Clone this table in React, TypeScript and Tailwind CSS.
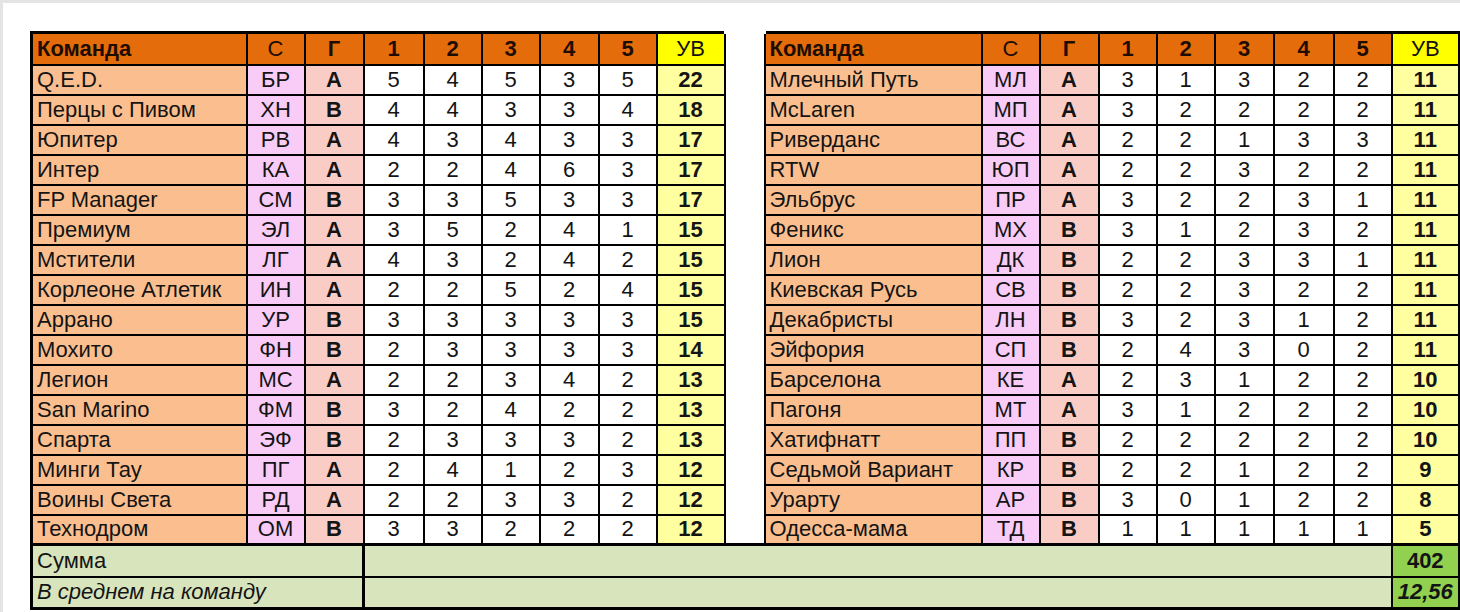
import React from "react";

type Row = [string, string, string, number[], number];

const left: Row[] = [
  ["Q.E.D.", "БР", "А", [5, 4, 5, 3, 5], 22],
  ["Перцы с Пивом", "ХН", "В", [4, 4, 3, 3, 4], 18],
  ["Юпитер", "РВ", "А", [4, 3, 4, 3, 3], 17],
  ["Интер", "КА", "А", [2, 2, 4, 6, 3], 17],
  ["FP Manager", "СМ", "В", [3, 3, 5, 3, 3], 17],
  ["Премиум", "ЭЛ", "А", [3, 5, 2, 4, 1], 15],
  ["Мстители", "ЛГ", "А", [4, 3, 2, 4, 2], 15],
  ["Корлеоне Атлетик", "ИН", "А", [2, 2, 5, 2, 4], 15],
  ["Аррано", "УР", "В", [3, 3, 3, 3, 3], 15],
  ["Мохито", "ФН", "В", [2, 3, 3, 3, 3], 14],
  ["Легион", "МС", "А", [2, 2, 3, 4, 2], 13],
  ["San Marino", "ФМ", "В", [3, 2, 4, 2, 2], 13],
  ["Спарта", "ЭФ", "В", [2, 3, 3, 3, 2], 13],
  ["Минги Тау", "ПГ", "А", [2, 4, 1, 2, 3], 12],
  ["Воины Света", "РД", "А", [2, 2, 3, 3, 2], 12],
  ["Технодром", "ОМ", "В", [3, 3, 2, 2, 2], 12],
];

const right: Row[] = [
  ["Млечный Путь", "МЛ", "А", [3, 1, 3, 2, 2], 11],
  ["McLaren", "МП", "А", [3, 2, 2, 2, 2], 11],
  ["Риверданс", "ВС", "А", [2, 2, 1, 3, 3], 11],
  ["RTW", "ЮП", "А", [2, 2, 3, 2, 2], 11],
  ["Эльбрус", "ПР", "А", [3, 2, 2, 3, 1], 11],
  ["Феникс", "МХ", "В", [3, 1, 2, 3, 2], 11],
  ["Лион", "ДК", "В", [2, 2, 3, 3, 1], 11],
  ["Киевская Русь", "СВ", "В", [2, 2, 3, 2, 2], 11],
  ["Декабристы", "ЛН", "В", [3, 2, 3, 1, 2], 11],
  ["Эйфория", "СП", "В", [2, 4, 3, 0, 2], 11],
  ["Барселона", "КЕ", "А", [2, 3, 1, 2, 2], 10],
  ["Пагоня", "МТ", "А", [3, 1, 2, 2, 2], 10],
  ["Хатифнатт", "ПП", "В", [2, 2, 2, 2, 2], 10],
  ["Седьмой Вариант", "КР", "В", [2, 2, 1, 2, 2], 9],
  ["Урарту", "АР", "В", [3, 0, 1, 2, 2], 8],
  ["Одесса-мама", "ТД", "В", [1, 1, 1, 1, 1], 5],
];

const cell = "border-2 border-black p-0 leading-none";
const hdr = `${cell} bg-[#e46c0a] text-[#1f0c00] text-center font-bold`;

function HeaderCells() {
  return (
    <>
      <td className={`${cell} bg-[#e46c0a] text-[#1f0c00] font-bold text-left pl-[4px]`}>Команда</td>
      <td className={`${hdr} font-normal`}>С</td>
      <td className={hdr}>Г</td>
      {[1, 2, 3, 4, 5].map((n) => (
        <td key={n} className={hdr}>{n}</td>
      ))}
      <td className={`${cell} bg-[#ffff00] text-center text-[#111]`}>УВ</td>
    </>
  );
}

function RowCells({ r }: { r: Row }) {
  return (
    <>
      <td className={`${cell} bg-[#fbbf8f] text-left pl-[4px] whitespace-nowrap`}>{r[0]}</td>
      <td className={`${cell} bg-[#f9ccf7] text-center`}>{r[1]}</td>
      <td className={`${cell} bg-[#f9cdc6] text-center font-bold`}>{r[2]}</td>
      {r[3].map((n, i) => (
        <td key={i} className={`${cell} bg-white text-center`}>{n}</td>
      ))}
      <td className={`${cell} bg-[#ffff9f] text-center font-bold`}>{r[4]}</td>
    </>
  );
}

export default function App() {
  const widthsL = [215, 58, 59, 60, 58, 58, 59, 58, 68];
  const widthsR = [217, 58, 59, 58, 58, 59, 60, 58, 68];
  return (
    <div
      className="w-[1460px] h-[612px] bg-white border-t-[3px] border-l-[3px] border-[#e4e4e4] overflow-hidden"
      style={{ fontFamily: '"Liberation Sans", Arial, sans-serif' }}
    >
      <div className="pl-[27px] pt-[28px]">
        <table className="table-fixed border-collapse border-[3px] border-black text-[22px] text-[#141414] w-[1428px]">
          <colgroup>
            {widthsL.map((w, i) => (
              <col key={"l" + i} style={{ width: w }} />
            ))}
            <col style={{ width: 40 }} />
            {widthsR.map((w, i) => (
              <col key={"r" + i} style={{ width: w }} />
            ))}
          </colgroup>
          <tbody>
            <tr className="h-[32px]">
              <HeaderCells />
              <td className="p-0 bg-white border-t-[3px] border-t-white"></td>
              <HeaderCells />
            </tr>
            {left.map((r, i) => (
              <tr key={i} className="h-[30px]">
                <RowCells r={r} />
                <td className="p-0 bg-white"></td>
                <RowCells r={right[i]} />
              </tr>
            ))}
            <tr className="h-[32px]">
              <td colSpan={3} className={`${cell} border-t-[3px] bg-[#d8e4bc] text-left pl-[4px]`}>Сумма</td>
              <td colSpan={15} className={`${cell} border-t-[3px] border-l-[3px] bg-[#d8e4bc]`}></td>
              <td className={`${cell} border-t-[3px] bg-[#92d050] text-center font-bold`}>402</td>
            </tr>
            <tr className="h-[32px]">
              <td colSpan={3} className={`${cell} bg-[#d8e4bc] text-left pl-[4px] italic`}>В среднем на команду</td>
              <td colSpan={15} className={`${cell} border-l-[3px] bg-[#d8e4bc]`}></td>
              <td className={`${cell} bg-[#92d050] text-center font-bold italic`}>12,56</td>
            </tr>
          </tbody>
        </table>
      </div>
    </div>
  );
}
